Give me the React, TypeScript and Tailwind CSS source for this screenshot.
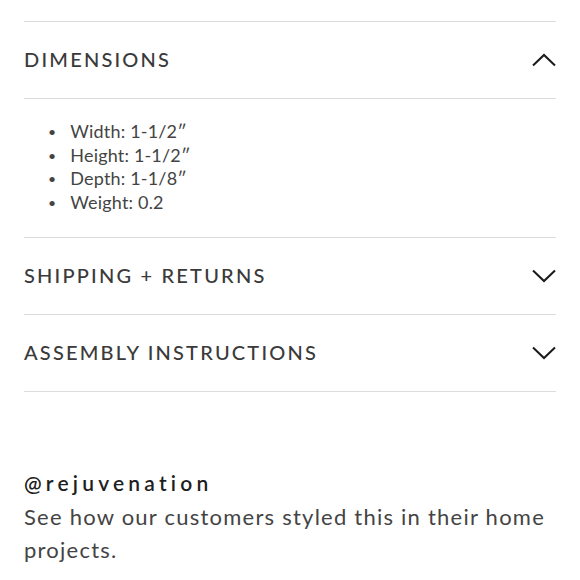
const font = { fontFamily: '"Lato", "Liberation Sans", sans-serif' }

function Chevron({ up }: { up?: boolean }) {
  return (
    <svg width="24" height="14" viewBox="0 0 24 14" fill="none" stroke="#1a1a1a" strokeWidth="2">
      {up ? <path d="M1 12.5 L12 2 L23 12.5" /> : <path d="M1 1.5 L12 12 L23 1.5" />}
    </svg>
  )
}

function Section({ title, open }: { title: string; open?: boolean }) {
  return (
    <div className="flex h-[77px] items-center justify-between border-b border-[#dcdcdc]">
      <h3 className="-mt-[3px] text-[20px] font-medium tracking-[0.11em] text-[#3a3a3a]">{title}</h3>
      <Chevron up={open} />
    </div>
  )
}

export default function App() {
  const dims = ['Width: 1-1/2″', 'Height: 1-1/2″', 'Depth: 1-1/8″', 'Weight: 0.2']
  return (
    <div className="h-[580px] w-[580px] overflow-hidden bg-white px-6 pt-[21px]" style={font}>
      <div className="border-t border-[#dcdcdc]">
        <Section title="DIMENSIONS" open />
        <ul className="border-b border-[#dcdcdc] pb-[23px] pl-6 pt-[21px] text-[18px] leading-[23.5px] tracking-[0.01em] text-[#444]">
          {dims.map((d) => (
            <li key={d} className="flex items-center">
              <span className="mr-[14px] text-[14px]">•</span>
              {d}
            </li>
          ))}
        </ul>
        <Section title="SHIPPING + RETURNS" />
        <Section title="ASSEMBLY INSTRUCTIONS" />
      </div>
      <div className="pt-[75px]">
        <p className="text-[21px] font-semibold tracking-[0.2em] text-[#1f1f1f]">@rejuvenation</p>
        <p className="mt-[1px] text-[22px] leading-[33px] tracking-[0.056em] text-[#444]">
          See how our customers styled this in their home projects.
        </p>
      </div>
    </div>
  )
}
